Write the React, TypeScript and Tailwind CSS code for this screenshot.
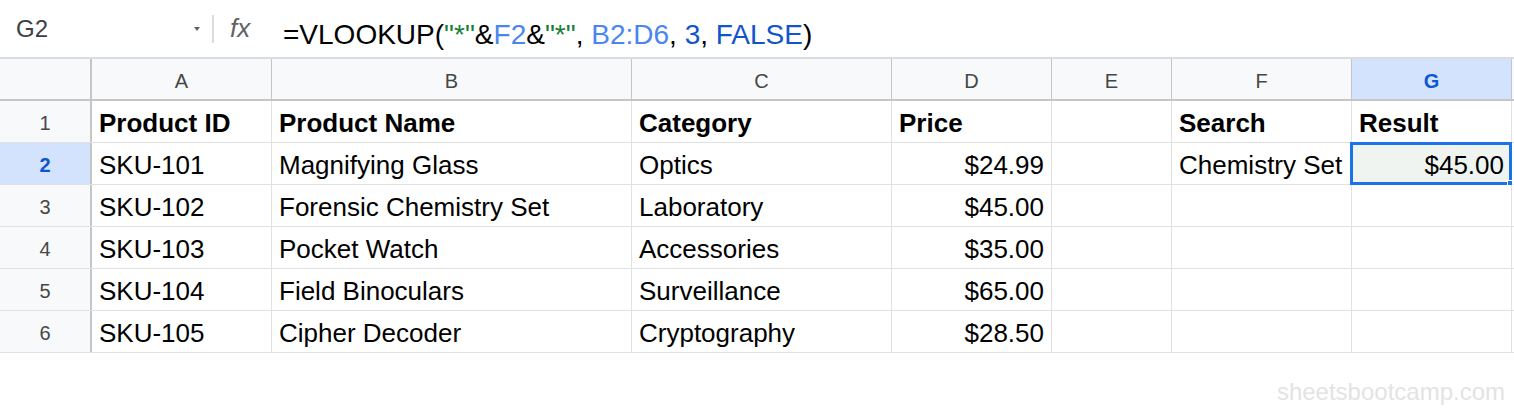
import React from 'react';

// Column widths written out in full so Tailwind picks them up
const columns = [
  { key: 'A', width: 'w-[180px]' },
  { key: 'B', width: 'w-[360px]' },
  { key: 'C', width: 'w-[260px]' },
  { key: 'D', width: 'w-[160px]' },
  { key: 'E', width: 'w-[120px]' },
  { key: 'F', width: 'w-[180px]' },
  { key: 'G', width: 'w-[160px]' },
];

interface Cell {
  text: string;
  bold?: boolean;
  right?: boolean;
}

const rows: Cell[][] = [
  [
    { text: 'Product ID', bold: true },
    { text: 'Product Name', bold: true },
    { text: 'Category', bold: true },
    { text: 'Price', bold: true },
    { text: '' },
    { text: 'Search', bold: true },
    { text: 'Result', bold: true },
  ],
  [
    { text: 'SKU-101' },
    { text: 'Magnifying Glass' },
    { text: 'Optics' },
    { text: '$24.99', right: true },
    { text: '' },
    { text: 'Chemistry Set' },
    { text: '$45.00', right: true },
  ],
  [
    { text: 'SKU-102' },
    { text: 'Forensic Chemistry Set' },
    { text: 'Laboratory' },
    { text: '$45.00', right: true },
    { text: '' },
    { text: '' },
    { text: '' },
  ],
  [
    { text: 'SKU-103' },
    { text: 'Pocket Watch' },
    { text: 'Accessories' },
    { text: '$35.00', right: true },
    { text: '' },
    { text: '' },
    { text: '' },
  ],
  [
    { text: 'SKU-104' },
    { text: 'Field Binoculars' },
    { text: 'Surveillance' },
    { text: '$65.00', right: true },
    { text: '' },
    { text: '' },
    { text: '' },
  ],
  [
    { text: 'SKU-105' },
    { text: 'Cipher Decoder' },
    { text: 'Cryptography' },
    { text: '$28.50', right: true },
    { text: '' },
    { text: '' },
    { text: '' },
  ],
];

function FormulaBar() {
  return (
    <div className="flex h-[59px] items-start border-b-2 border-[#dadce0] bg-white">
      {/* Name box */}
      <div className="flex w-[212px] items-start pl-[16px]">
        <span className="flex-1 pt-[17px] text-[24px] leading-none text-[#3c4043]">G2</span>
        <svg className="mr-[12px] mt-[27px]" width="6" height="4" viewBox="0 0 6 4">
          <path d="M0 0 L6 0 L3 4 Z" fill="#5f6368" />
        </svg>
      </div>
      <div className="mt-[15px] h-[28px] w-[2px] bg-[#dadce0]" />
      <span className="w-[69px] pl-[16px] pt-[15px] text-[26px] italic leading-none text-[#5f6368]">fx</span>
      <div className="pt-[21px] text-[28px] leading-none text-black">
        <span>=VLOOKUP(</span>
        <span className="text-[#188038]">"*"</span>
        <span>&amp;</span>
        <span className="text-[#4a86f0]">F2</span>
        <span>&amp;</span>
        <span className="text-[#188038]">"*"</span>
        <span>, </span>
        <span className="text-[#4a86f0]">B2:D6</span>
        <span>, </span>
        <span className="text-[#1155cc]">3</span>
        <span>, </span>
        <span className="text-[#1155cc]">FALSE</span>
        <span>)</span>
      </div>
    </div>
  );
}

function HeaderRow() {
  return (
    <div className="flex h-[42px] border-b-2 border-[#c4c7c5] bg-[#f8f9fa]">
      <div className="w-[92px] shrink-0 border-r-2 border-[#c4c7c5]" />
      {columns.map((col) => {
        const selected = col.key === 'G';
        return (
          <div
            key={col.key}
            className={`${col.width} shrink-0 border-r border-[#c4c7c5] pt-[12px] text-center text-[20px] leading-none ${
              selected ? 'bg-[#d3e3fd] font-bold text-[#0b57d0]' : 'text-[#444746]'
            }`}
          >
            {col.key}
          </div>
        );
      })}
      <div className="flex-1" />
    </div>
  );
}

function App() {
  return (
    <div className="relative h-[414px] w-full overflow-hidden bg-white font-['Liberation_Sans',Arial,sans-serif]">
      <FormulaBar />
      <HeaderRow />
      {rows.map((row, r) => {
        const rowSelected = r === 1;
        return (
          <div key={r} className="flex h-[42px] border-b border-[#e1e1e1]">
            <div
              className={`w-[92px] shrink-0 border-r-2 border-[#c4c7c5] pt-[12px] text-center text-[20px] leading-none ${
                rowSelected ? 'bg-[#d3e3fd] font-bold text-[#0b57d0]' : 'bg-[#f8f9fa] text-[#444746]'
              }`}
            >
              {r + 1}
            </div>
            {row.map((cell, c) => {
              const active = r === 1 && c === 6;
              return (
                <div
                  key={c}
                  className={`${columns[c].width} relative shrink-0 border-r border-[#e1e1e1] px-[7px] pt-[8.5px] text-[26px] leading-none text-black whitespace-nowrap ${
                    cell.bold ? 'font-bold' : ''
                  } ${cell.right ? 'text-right' : ''} ${active ? 'bg-[#eff4f0]' : ''}`}
                >
                  {cell.text}
                  {active && (
                    <div className="absolute -bottom-[1px] -left-[2px] -right-[1px] -top-[1px] border-[3px] border-[#1a73e8]">
                      <div className="absolute -bottom-[4px] -right-[4px] h-[6px] w-[6px] border border-white bg-[#1a73e8]" />
                    </div>
                  )}
                </div>
              );
            })}
            <div className="flex-1" />
          </div>
        );
      })}
      <div className="mt-[27px] pr-[9px] text-right text-[24px] leading-[24px] text-[#e3e3e3]">
        sheetsbootcamp.com
      </div>
    </div>
  );
}

export default App;
